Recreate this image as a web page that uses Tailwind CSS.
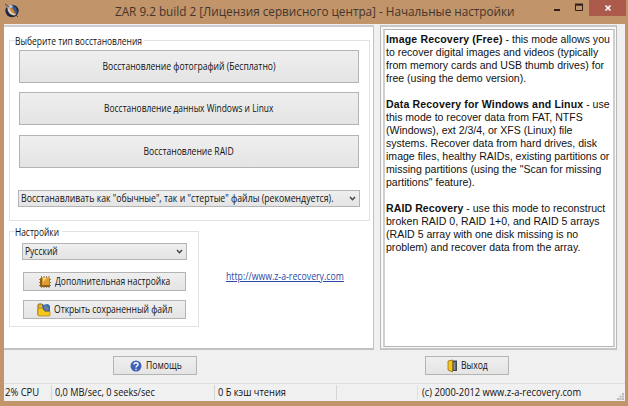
<!DOCTYPE html>
<html lang="ru"><head><meta charset="utf-8"><title>ZAR 9.2</title>
<script src="https://cdn.jsdelivr.net/npm/@tailwindcss/browser@4"></script></head>
<body class="w-[628px] h-[406px] overflow-hidden">
<div class="w-[628px] h-[406px] bg-[#c19469] flex flex-col pl-1 pr-[3px] pb-[5px] font-['Open_Sans','Noto_Sans',sans-serif] text-[10px] text-[#111]">
  <header class="h-6 shrink-0 flex relative">
    <svg class="w-4 h-4 mt-[3px] shrink-0" viewBox="0 0 16 16"><ellipse cx="8" cy="8" rx="6.6" ry="6.2" fill="#20263a"/><path d="M3 3Q8 0 12 5L13.500 10Q9 14 4 9Z" fill="#3c5a92"/><path d="M3 3Q7 1 9 3L7 6L4 7Z" fill="#b9c3d3"/><path d="M3.500 7L5 6L11 10L12 12L9.500 12.500L6 11Z" fill="#d8d2c6"/><path d="M5 4L9 6L12 12L7 9Z" fill="#dd8729"/><path d="M1 1L5 4M12 12L14 14" stroke="#444" stroke-width="1"/></svg>
    <h1 class="ml-[94.5px] mt-[3px] leading-[18px] text-[12.5px] whitespace-nowrap text-[#44342d]"><span class="inline-block origin-left scale-x-[.938]">ZAR 9.2 build 2 [Лицензия сервисного центра] - Начальные настройки</span></h1>
    <div class="absolute -right-px top-0 flex h-4">
      <svg class="w-[36px] h-4" viewBox="0 0 36 16"><path d="M1 10H7" stroke="#30211b" stroke-width="2"/><path d="M22.5 5H29.500V10.500H22.500Z" fill="none" stroke="#30211b"/><path d="M22 4.500H30" stroke="#30211b" stroke-width="2"/></svg>
      <div class="w-[37px] h-4 bg-[#ab5a4b] flex justify-center"><svg class="w-2 h-4" viewBox="0 0 8 16"><path d="M1.500 5.500L6.500 10.500M6.500 5.500L1.500 10.500" stroke="#fff" stroke-width="1.600"/></svg></div>
    </div>
  </header>
  <main class="h-[377px] bg-[#f0f0f0] flex flex-col">
    <div class="flex gap-1.5 h-[326px] pt-px">
      <section class="w-[370px] h-[325px] bg-white border-t-2 border-b-2 border-r border-[#c2c2c2] border-t-[#cfcbd2] px-[5px] pt-[13px]">
        <div class="relative w-[361px] h-[181px] border border-[#e2e2e2] pl-[9px] pt-[9px] flex flex-col">
          <div class="absolute left-[5px] -top-[7px] w-[129px] h-[14px] bg-white leading-[14px] whitespace-nowrap"><span class="inline-block origin-left scale-x-[.845]">Выберите тип восстановления</span></div>
          <button class="w-[340px] h-[33px] border border-[#b4b4b4] bg-linear-to-b from-[#efefef] to-[#e4e4e4]"><span class="inline-block scale-x-[.857]">Восстановление фотографий (Бесплатно)</span></button>
          <button class="mt-[9px] w-[340px] h-[33px] border border-[#b4b4b4] bg-linear-to-b from-[#efefef] to-[#e4e4e4]"><span class="inline-block scale-x-[.84]">Восстановление данных Windows и Linux</span></button>
          <button class="mt-[10px] w-[340px] h-[33px] border border-[#b4b4b4] bg-linear-to-b from-[#efefef] to-[#e4e4e4]"><span class="inline-block scale-x-[.857]">Восстановление RAID</span></button>
          <div class="mt-[22px] -ml-px w-[342px] h-[17px] border border-[#b4b4b4] bg-linear-to-b from-[#efefef] to-[#e4e4e4] flex items-center justify-between pl-0.5 pr-[3px] whitespace-nowrap"><span class="w-[320px]"><span class="inline-block origin-left scale-x-[.874]">Восстанавливать как "обычные", так и "стертые" файлы (рекомендуется).</span></span><svg class="w-[7px] h-[7px] shrink-0" viewBox="0 0 7 7"><path d="M1 2L3.500 4.700L6 2" fill="none" stroke="#454545" stroke-width="1.500"/></svg></div>
        </div>
        <div class="flex mt-[10px]">
          <div class="relative w-[190px] h-[96px] border border-[#e2e2e2] px-[12px] pt-[11px] flex flex-col">
            <div class="absolute left-[5px] -top-[7px] w-[47px] h-[14px] bg-white leading-[14px]"><span class="inline-block origin-left scale-x-[.84]">Настройки</span></div>
            <div class="w-[165px] h-[17px] border border-[#b4b4b4] bg-linear-to-b from-[#efefef] to-[#e4e4e4] flex items-center justify-between pl-0.5 pr-[3px]"><span class="inline-block origin-left scale-x-[.85]">Русский</span><svg class="w-[7px] h-[7px]" viewBox="0 0 7 7"><path d="M1 2L3.500 4.700L6 2" fill="none" stroke="#454545" stroke-width="1.500"/></svg></div>
            <button class="mt-3 ml-px w-[163px] h-[19px] border border-[#b4b4b4] bg-linear-to-b from-[#efefef] to-[#e4e4e4] flex items-center pl-[14px] whitespace-nowrap"><svg class="w-[14px] h-[14px] mr-[3px] shrink-0" viewBox="0 0 14 14"><path d="M3.500 1V13M6 1V13M8.500 1V13M11 1V13M1 4.500H13M1 7.500H13M1 10.500H13" stroke="#8d8068"/><rect x="2" y="3" width="10" height="9" rx="1" fill="#8f611b"/><path d="M4 2.500H11.500V10H4Z" fill="#dc9d33"/><path d="M5 3H9L5 7Z" fill="#f7d477"/></svg><span class="inline-block origin-left scale-x-[.847]">Дополнительная настройка</span></button>
            <button class="mt-[9px] ml-px w-[163px] h-[19px] border border-[#b4b4b4] bg-linear-to-b from-[#efefef] to-[#e4e4e4] flex items-center pl-[13px] whitespace-nowrap"><svg class="w-[14px] h-[14px] mr-[3px] shrink-0" viewBox="0 0 14 14"><path d="M1 4V2Q1 1 2 1H5L7 3V12H1Z" fill="#eeb817" stroke="#8b6520"/><path d="M5 2L11 1L13 3V9H6Z" fill="#356bb5"/><path d="M8 2L12 5L10 8L7 5Z" fill="#777c97"/><path d="M1 5H5L8 8.500H13V12Q13 13 12 13H2Q1 13 1 12Z" fill="#f5c719" stroke="#a67818" stroke-width=".7"/></svg><span class="inline-block origin-left scale-x-[.855]">Открыть сохраненный файл</span></button>
          </div>
          <a class="ml-[27px] mt-[38px] text-[#2a49a6] whitespace-nowrap leading-[14px] h-[14px]"><span class="inline-block origin-left scale-x-[.874] underline">http://www.z-a-recovery.com</span></a>
        </div>
      </section>
      <section class="w-[237px] h-[325px] border border-[#b8b8b8] border-t-2 border-b-2 border-t-[#c8c8c8] border-b-[#c5c5c5] bg-[#f8f8f8] pl-0.5 pt-0.5 pr-px">
        <div class="h-[318px] overflow-hidden bg-white border-2 border-[#d0d0d0] border-t border-t-[#b5b5b5] border-b border-b-[#b5b5b5] pl-px pt-[3px]">
          <div class="w-[245px] origin-left scale-x-[.917] font-['Liberation_Sans',sans-serif] text-[11.5px] leading-[13px] whitespace-nowrap">
          <p><b class="tracking-[.18px]">Image Recovery (Free)</b> - this mode allows you</p><p>to recover digital images and videos (typically</p><p>from memory cards and USB thumb drives) for</p><p>free (using the demo version).</p>
          <p class="mt-[13px]"><b class="tracking-[.16px]">Data Recovery for Windows and Linux</b> - use</p><p>this mode to recover data from FAT, NTFS</p><p>(Windows), ext 2/3/4, or XFS (Linux) file</p><p>systems. Recover data from hard drives, disk</p><p>image files, healthy RAIDs, existing partitions or</p><p>missing partitions (using the "Scan for missing</p><p>partitions" feature).</p>
          <p class="mt-[13px]"><b class="tracking-[.1px]">RAID Recovery</b> - use this mode to reconstruct</p><p>broken RAID 0, RAID 1+0, and RAID 5 arrays</p><p>(RAID 5 array with one disk missing is no</p><p>problem) and recover data from the array.</p>
          </div>
        </div>
      </section>
    </div>
    <div class="h-[33px] flex pt-[6px] pl-[109px] gap-[228px]">
      <button class="w-[84px] h-[19px] border border-[#b4b4b4] bg-linear-to-b from-[#efefef] to-[#e4e4e4] flex items-center pl-4"><svg class="w-3 h-3 mr-1 shrink-0" viewBox="0 0 12 12"><circle cx="6" cy="6" r="5.500" fill="#3d61b5"/><path d="M4 4.500Q4 2.700 6 2.700T8 4.400Q8 5.300 6.800 6Q6 6.500 6 7.500M6 8.700V10" fill="none" stroke="#fff" stroke-width="1.400"/></svg><span class="inline-block origin-left scale-x-[.86]">Помощь</span></button>
      <button class="w-[84px] h-[19px] border border-[#b4b4b4] bg-linear-to-b from-[#efefef] to-[#e4e4e4] flex items-center pl-[21px]"><svg class="w-[11px] h-[14px] mr-[3px] shrink-0" viewBox="0 0 11 14"><path d="M3 1.500H10V12H3Z" fill="#414653"/><path d="M7.500 3V11" stroke="#888e99" stroke-width="2"/><path d="M1 2L5.500 1V13L1 11Z" fill="#f4c51b" stroke="#93731d" stroke-width=".8"/></svg><span class="inline-block origin-left scale-x-[.86]">Выход</span></button>
    </div>
    <footer class="h-[18px] border-t border-[#dedede] flex items-center relative text-[10.5px] whitespace-nowrap">
      <div class="w-[48px] pl-px leading-[15px] border-r border-[#d5d5d5]"><span class="inline-block origin-left scale-x-[.9]">2% CPU</span></div><div class="w-[163px] pl-[3px] leading-[15px] border-r border-[#d5d5d5]"><span class="inline-block origin-left scale-x-[.87]">0,0 MB/sec, 0 seeks/sec</span></div><div class="w-[122px] pl-[3px] leading-[15px] border-r border-[#d5d5d5]"><span class="inline-block origin-left scale-x-[.883]">0 Б кэш чтения</span></div><div class="w-[81px] h-[15px] border-r border-[#e0e0e0]"></div><div class="pl-1 leading-[15px]"><span class="inline-block origin-left scale-x-[.89]">(c) 2000-2012 www.z-a-recovery.com</span></div>
      <svg class="absolute right-px bottom-px w-[7px] h-[7px]" viewBox="0 0 7 7"><path d="M5 0H7V2H5ZM2.500 2.500H4.500V4.500H2.500ZM5 2.500H7V4.500H5ZM0 5H2V7H0ZM2.500 5H4.500V7H2.500ZM5 5H7V7H5Z" fill="#bcbcbc"/></svg>
    </footer>
  </main>
</div>
</body></html>
